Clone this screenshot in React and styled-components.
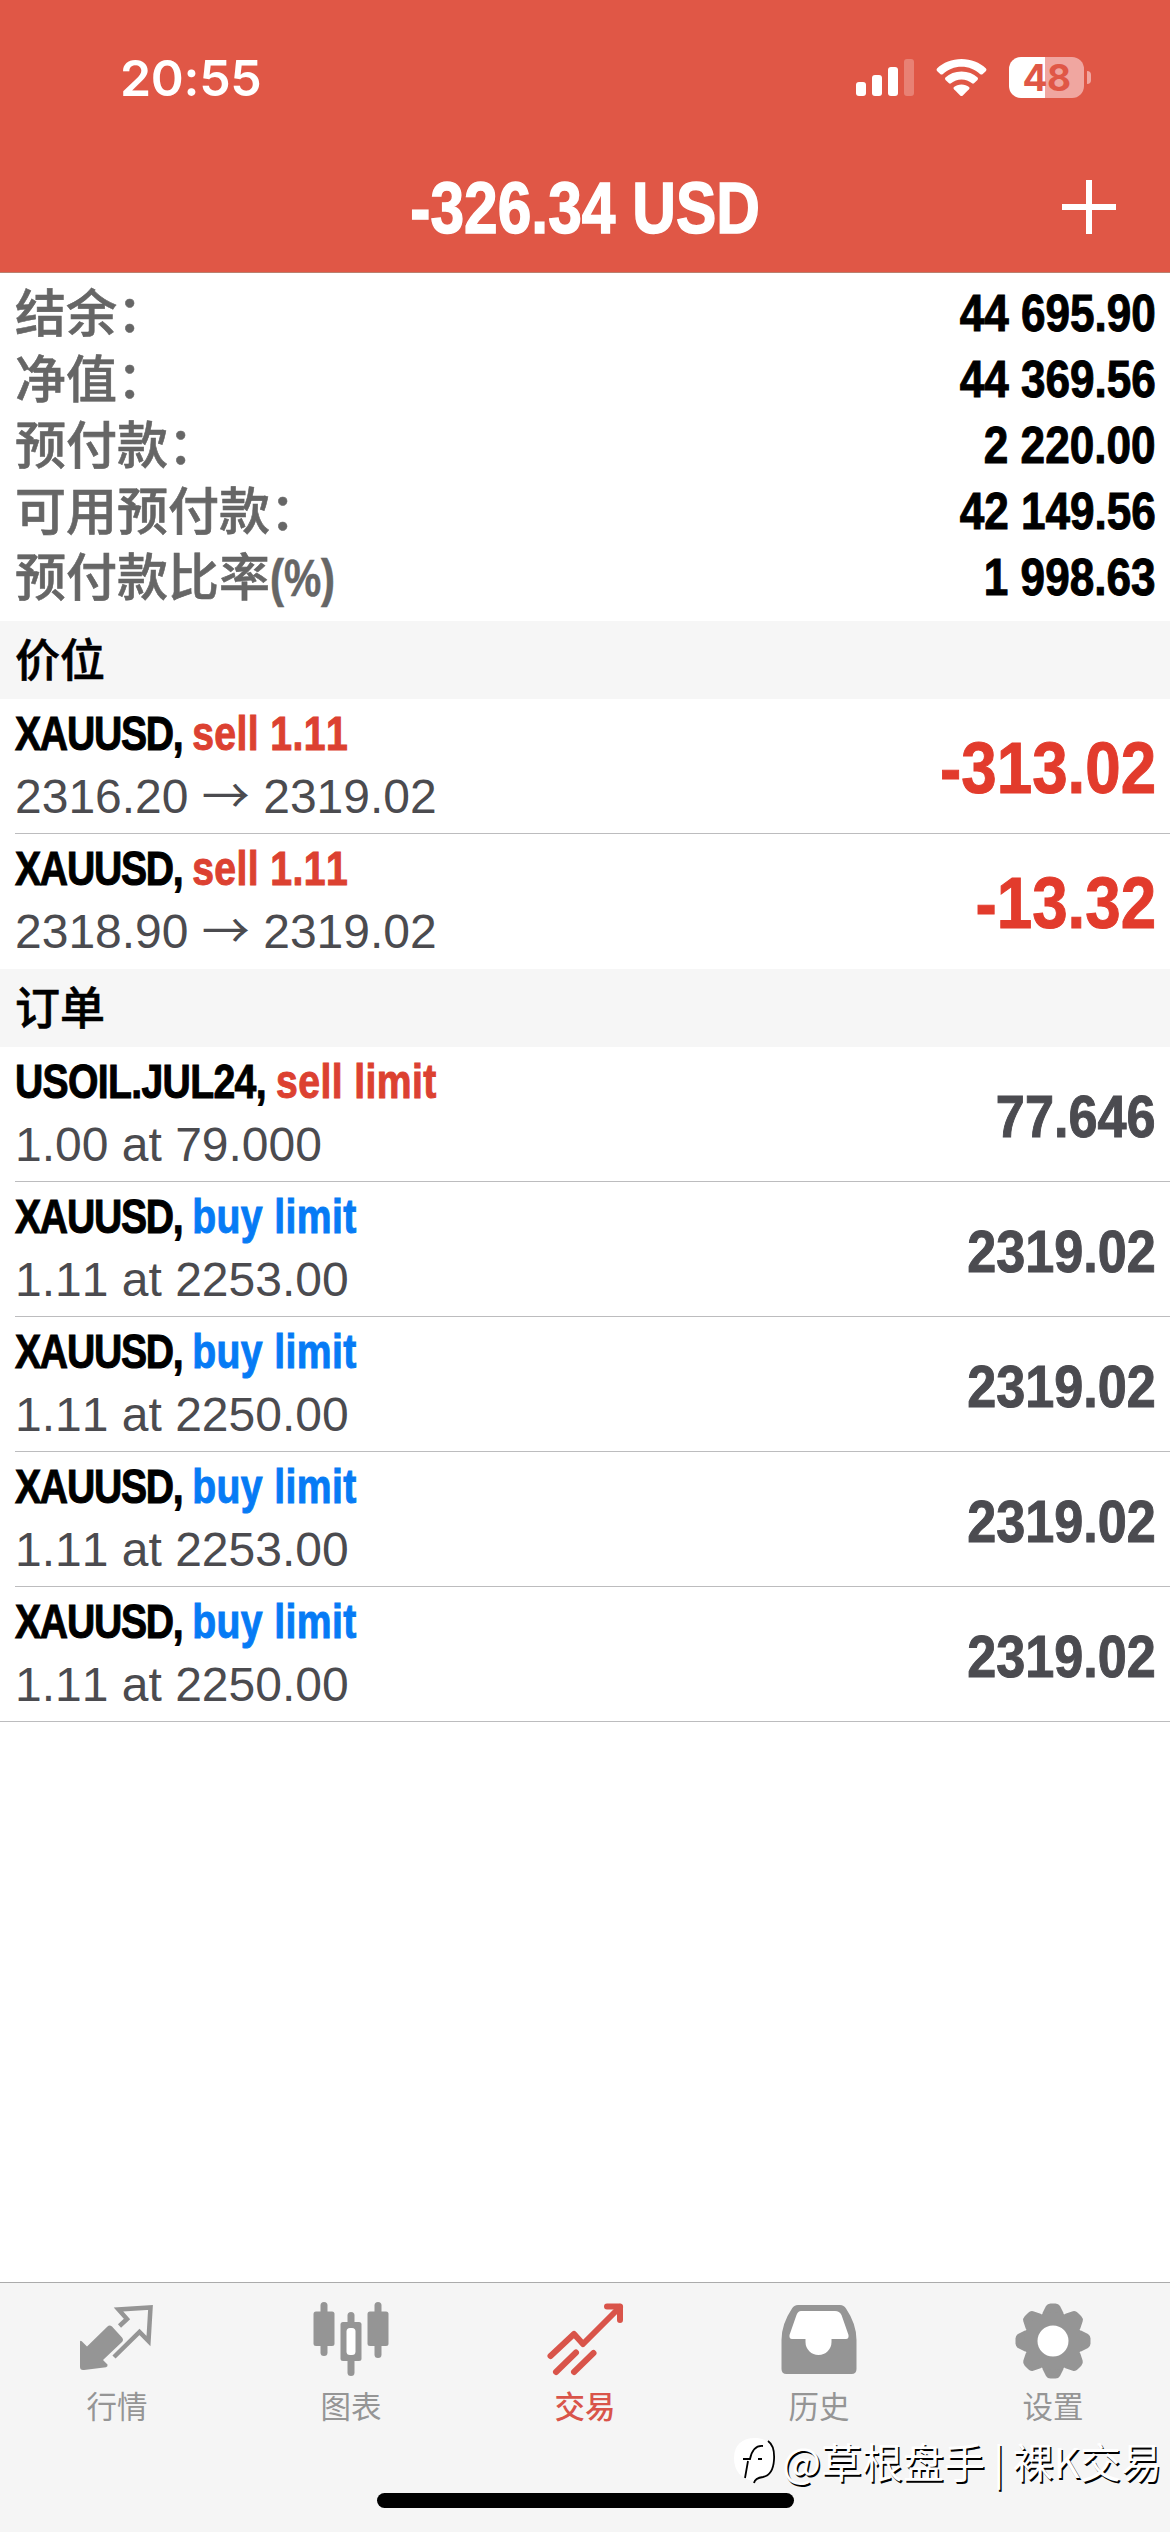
import React from 'react';
import styled, { createGlobalStyle } from 'styled-components';

const GlobalStyle = createGlobalStyle`
  * {
    box-sizing: border-box;
  }
  body {
    margin: 0;
    background: #fff;
    font-family: 'Liberation Sans', 'Noto Sans CJK SC', sans-serif;
    font-kerning: none;
  }
`;

const Screen = styled.div`
  position: relative;
  display: flex;
  flex-direction: column;
  width: 1170px;
  height: 2532px;
  overflow: hidden;
  background: #fff;
`;

const Header = styled.header`
  height: 273px;
  background: #e05746;
  border-bottom: 1px solid #b9816f;
  color: #fff;
`;

const StatusBar = styled.div`
  display: flex;
  justify-content: space-between;
  align-items: center;
  height: 155px;
  padding: 0 86px 0 120px;
`;

const Clock = styled.span`
  font-family: Inter, sans-serif;
  font-size: 50px;
  font-weight: 600;
  line-height: 60px;
  letter-spacing: -0.3px;
`;

const StatusIcons = styled.div`
  display: flex;
  align-items: center;
  gap: 22px;
`;

const Battery = styled.div`
  position: relative;
  display: flex;
  align-items: center;
  justify-content: center;
  width: 75px;
  height: 41px;
  border-radius: 12px;
  background: linear-gradient(to right, #fff 36px, #f0a6a0 36px);
  color: #e05746;
  font-family: Inter, sans-serif;
  font-size: 37px;
  font-weight: 700;
  line-height: 41px;
  letter-spacing: -0.5px;

  &::after {
    content: '';
    position: absolute;
    right: -7px;
    top: 14px;
    width: 4px;
    height: 13px;
    border-radius: 0 4px 4px 0;
    background: #f0a6a0;
  }
`;

const TitleBar = styled.div`
  display: grid;
  grid-template-columns: 1fr auto 1fr;
  align-items: center;
  height: 104px;
  padding: 0 54px;
`;

const Title = styled.h1`
  grid-column: 2;
  margin: 0;
  font-size: 72px;
  font-weight: 700;
  line-height: 104px;
  -webkit-text-stroke: 1.5px currentColor;
  transform: translateY(1px) scaleX(0.84);
`;

const AddButton = styled.button`
  justify-self: end;
  display: flex;
  padding: 0;
  border: 0;
  background: none;
`;

const Summary = styled.section`
  padding: 7px 14px 11px 15px;
`;

const SummaryRow = styled.div`
  display: flex;
  justify-content: space-between;
  align-items: center;
  height: 66px;
`;

const SummaryLabel = styled.span`
  padding-top: 4px;
  color: #666;
  font-size: 51px;
  font-weight: 500;
  line-height: 62px;
  -webkit-text-stroke: 0.6px currentColor;
`;

const Unit = styled.span`
  display: inline-block;
  font-weight: 700;
  transform: scaleX(0.82);
  transform-origin: left;
`;

const SummaryValue = styled.span`
  padding-top: 2px;
  color: #000;
  font-size: 51px;
  font-weight: 700;
  line-height: 64px;
  -webkit-text-stroke: 1px currentColor;
  transform: scaleX(0.865);
  transform-origin: right;
`;

const SectionTitle = styled.h2`
  height: 78px;
  margin: 0;
  padding: 0 15px;
  background: #f6f6f6;
  color: #000;
  font-size: 45px;
  font-weight: 500;
  line-height: 81px;
  -webkit-text-stroke: 0.6px currentColor;
`;

const List = styled.ul`
  margin: 0;
  padding: 0;
  list-style: none;
`;

const Row = styled.li`
  display: flex;
  justify-content: space-between;
  height: 135px;
  margin-left: ${({ $inset }) => ($inset ? '15px' : '0')};
  padding: 3px 14px 0 ${({ $inset }) => ($inset ? '0' : '15px')};
  border-bottom: 1px solid ${({ $line }) => ($line ? '#bcbcbe' : 'transparent')};
`;

const RowInfo = styled.div`
  display: flex;
  flex-direction: column;
`;

const RowTitle = styled.div`
  font-size: 48px;
  font-weight: 700;
  line-height: 63px;
  white-space: pre;
  -webkit-text-stroke: 1px currentColor;
  transform: scaleX(0.815);
  transform-origin: left;
`;

const Symbol = styled.span`
  letter-spacing: ${({ $tracking }) => $tracking};
`;

const Side = styled.span`
  color: ${({ $buy }) => ($buy ? '#067bf5' : '#dc4131')};
  letter-spacing: 0.5px;
`;

const RowDetail = styled.div`
  color: #4b4b4f;
  font-size: 48px;
  line-height: 63px;
`;

const Arrow = styled.span`
  font-family: 'Noto Sans CJK SC', sans-serif;
  font-weight: 400;
  line-height: 1;
`;

const RowAmount = styled.span`
  color: ${({ $loss }) => ($loss ? '#e23b2c' : '#4b4b50')};
  font-size: ${({ $loss }) => ($loss ? '72px' : '60px')};
  font-weight: 700;
  line-height: 133px;
  -webkit-text-stroke: 1px currentColor;
  transform: scaleX(${({ $loss }) => ($loss ? 0.885 : 0.87)});
  transform-origin: right;
`;

const TabBar = styled.nav`
  display: flex;
  height: 250px;
  margin-top: auto;
  border-top: 1px solid #ababab;
  background: #f5f5f5;
`;

const Tab = styled.a`
  flex: 1;
  display: flex;
  flex-direction: column;
  align-items: center;
  padding-top: 20px;
  color: ${({ $active }) => ($active ? '#d9544a' : '#959595')};
  font-family: 'Noto Sans CJK SC', sans-serif;
  font-size: 30.5px;
  font-weight: ${({ $active }) => ($active ? 500 : 400)};
  line-height: 40px;
  text-decoration: none;

  svg {
    margin-bottom: 6px;
    overflow: visible;
  }
`;

const HomeIndicator = styled.div`
  position: absolute;
  left: 377px;
  bottom: 24px;
  width: 417px;
  height: 15px;
  border-radius: 8px;
  background: #000;
`;

const Watermark = styled.div`
  position: absolute;
  right: 8px;
  bottom: 42px;
  display: flex;
  align-items: center;
  gap: 5px;
  color: #fff;
  font-family: 'Noto Sans CJK SC', sans-serif;
  font-size: 41px;
  line-height: 60px;
  white-space: pre;
  word-spacing: -1px;
  text-shadow: 1.5px 1.5px 0 #000;
`;

const SignalIcon = () => (
  <svg width="58" height="37" viewBox="0 0 58 37" fill="#fff">
    <rect x="0" y="23" width="10" height="14" rx="3" />
    <rect x="16" y="16" width="10" height="21" rx="3" />
    <rect x="32" y="8" width="10" height="29" rx="3" />
    <rect x="48" y="0" width="10" height="37" rx="3" opacity="0.25" />
  </svg>
);

const WifiIcon = () => (
  <svg width="51" height="37" viewBox="0 0 51 37" fill="#fff">
    <path d="M25.5 0C35 0 43.700 3.500 50 9.500Q51 10.800 50 12L46.500 15.200Q45.500 16 44.300 15.200C39 10.400 32.600 7.800 25.500 7.800S12 10.400 6.700 15.200Q5.500 16 4.500 15.200L1 12Q0 10.800 1 9.500C7.300 3.500 16 0 25.500 0Z" />
    <path d="M25.500 12.500C32 12.500 37.400 14.800 41.600 18.600Q42.500 19.800 41.500 21L38 24.300Q37 25 36 24.300C33 21.800 29.500 20.500 25.500 20.500S18 21.800 15 24.300Q14 25 13 24.300L9.500 21Q8.500 19.800 9.400 18.600C13.600 14.800 19 12.500 25.500 12.500Z" />
    <path d="M25.500 25.500C28.500 25.500 31 26.500 33 28Q34 29.200 33 30.300L26.800 36.400Q25.500 37.400 24.200 36.400L18 30.300Q17 29.200 18 28C20 26.500 22.500 25.500 25.500 25.500Z" />
  </svg>
);

const PlusIcon = () => (
  <svg width="54" height="54" viewBox="0 0 54 54" stroke="#fff" strokeWidth="6">
    <path d="M27 0V54M0 27H54" />
  </svg>
);

const QuotesIcon = () => (
  <svg width="76" height="76" viewBox="0 0 76 76">
    <path
      d="M1 34.500Q1.500 33 3 34.500L8 39.500L28.500 19.500Q30.500 17.500 33 19.500L43 30.500Q45 32.800 43 35L24 53L28.500 57.500Q29 59.800 27 60.200L5 63Q1 63.500 1 60Z"
      fill="currentColor"
      transform="translate(0 4)"
    />
    <path
      d="M40.500 22L48 15L39.500 5.500L71.500 3.500L69.500 37L60.500 28L35 53"
      fill="none"
      stroke="currentColor"
      strokeWidth="4.500"
      transform="translate(0 1)"
    />
  </svg>
);

const ChartIcon = () => (
  <svg width="76" height="76" viewBox="0 0 76 76" fill="currentColor">
    <rect x="7.500" y="-1" width="7" height="54" rx="3.500" />
    <rect x="0.500" y="8.500" width="21" height="34.500" rx="2.500" />
    <rect x="61.500" y="-1" width="7" height="56" rx="3.500" />
    <rect x="54.500" y="8.500" width="21" height="34.500" rx="2.500" />
    <rect x="34.500" y="9" width="7" height="64" rx="3.500" />
    <rect x="27.500" y="19" width="21" height="39" rx="2.500" />
    <rect x="33.500" y="25" width="9" height="27" rx="3.500" fill="#fff" />
  </svg>
);

const TradeIcon = () => (
  <svg
    width="76"
    height="76"
    viewBox="0 0 76 76"
    fill="none"
    stroke="currentColor"
    strokeWidth="6"
    strokeLinecap="round"
    strokeLinejoin="round"
  >
    <path d="M3.500 53L27 31L36 41L73 4" />
    <path d="M60 3.500H73V17" />
    <path d="M9 69L29 49.500M27 69L46.500 50" />
  </svg>
);

const HistoryIcon = () => (
  <svg width="76" height="76" viewBox="0 0 76 76">
    <path
      d="M17 2H59Q63 2 65 5.500Q75.500 21 75.500 37V66Q75.500 71 70.500 71H5.500Q0.500 71 0.500 66V37Q0.500 21 11 5.500Q13 2 17 2Z"
      fill="currentColor"
    />
    <path
      d="M20 8H54Q58.500 8 60.500 12L67.500 32Q68 36 65 36H50.500V39A13 13 0 0 1 24.500 39V36H11Q8 36 8.500 32L15.500 12Q17 8 20 8Z"
      fill="#fff"
    />
  </svg>
);

const SettingsIcon = () => (
  <svg width="76" height="76" viewBox="0 0 76 76" fill="currentColor">
    {[0, 45, 90, 135].map((angle) => (
      <path
        key={angle}
        d="M31 3Q32.500 0.500 35.500 0.500H40.500Q43.500 0.500 45 3L48.500 10V66L45 73Q43.500 75.500 40.500 75.500H35.500Q32.500 75.500 31 73L27.500 66V10Z"
        transform={`rotate(${angle} 38 38)`}
      />
    ))}
    <circle cx="38" cy="38" r="29" />
    <circle cx="38" cy="38" r="15.500" fill="#fff" />
  </svg>
);

const WatermarkLogo = () => (
  <svg width="44" height="48" viewBox="0 0 44 48">
    <path d="M22 2C34 2 41 9 41 22C41 35 34 42 21 45C8 43 1 35 1 22S9 2 22 2Z" fill="#fff" />
    <path
      d="M35 5Q42 10 41 24Q40 39 30 41Q22 42 21 47M12 42L15 25M10 23H17Q20 9 30 10M25 23H29"
      fill="none"
      stroke="#000"
      strokeWidth="1.800"
    />
  </svg>
);

const summary = [
  { label: '结余：', value: '44 695.90' },
  { label: '净值：', value: '44 369.56' },
  { label: '预付款：', value: '2 220.00' },
  { label: '可用预付款：', value: '42 149.56' },
  { label: '预付款比率', unit: '(%)', value: '1 998.63' },
];

const positions = [
  { symbol: 'XAUUSD', side: 'sell 1.11', open: '2316.20', current: '2319.02', profit: '-313.02' },
  { symbol: 'XAUUSD', side: 'sell 1.11', open: '2318.90', current: '2319.02', profit: '-13.32' },
];

const orders = [
  { symbol: 'USOIL.JUL24', side: 'sell limit', detail: '1.00 at 79.000', price: '77.646', tracking: '-0.8px' },
  { symbol: 'XAUUSD', side: 'buy limit', detail: '1.11 at 2253.00', price: '2319.02' },
  { symbol: 'XAUUSD', side: 'buy limit', detail: '1.11 at 2250.00', price: '2319.02' },
  { symbol: 'XAUUSD', side: 'buy limit', detail: '1.11 at 2253.00', price: '2319.02' },
  { symbol: 'XAUUSD', side: 'buy limit', detail: '1.11 at 2250.00', price: '2319.02' },
];

const tabs = [
  { label: '行情', Icon: QuotesIcon },
  { label: '图表', Icon: ChartIcon },
  { label: '交易', Icon: TradeIcon, active: true },
  { label: '历史', Icon: HistoryIcon },
  { label: '设置', Icon: SettingsIcon },
];

const TradeRow = ({ symbol, side, tracking = '-1.5px', amount, loss, inset, line, children }) => (
  <Row $inset={inset} $line={line}>
    <RowInfo>
      <RowTitle>
        <Symbol $tracking={tracking}>{symbol}, </Symbol>
        <Side $buy={side.startsWith('buy')}>{side}</Side>
      </RowTitle>
      <RowDetail>{children}</RowDetail>
    </RowInfo>
    <RowAmount $loss={loss}>{amount}</RowAmount>
  </Row>
);

const App = () => {
  return (
    <>
      <GlobalStyle />
      <Screen>
        <Header>
          <StatusBar>
            <Clock>20:55</Clock>
            <StatusIcons>
              <SignalIcon />
              <WifiIcon />
              <Battery>48</Battery>
            </StatusIcons>
          </StatusBar>
          <TitleBar>
            <Title>-326.34 USD</Title>
            <AddButton>
              <PlusIcon />
            </AddButton>
          </TitleBar>
        </Header>
        <Summary>
          {summary.map(({ label, unit, value }) => (
            <SummaryRow key={label}>
              <SummaryLabel>
                {label}
                {unit && <Unit>{unit}</Unit>}
              </SummaryLabel>
              <SummaryValue>{value}</SummaryValue>
            </SummaryRow>
          ))}
        </Summary>
        <SectionTitle>价位</SectionTitle>
        <List>
          {positions.map(({ symbol, side, open, current, profit }, i) => {
            const last = i === positions.length - 1;
            return (
              <TradeRow key={i} symbol={symbol} side={side} amount={profit} loss inset={!last} line={!last}>
                {open} <Arrow>→</Arrow> {current}
              </TradeRow>
            );
          })}
        </List>
        <SectionTitle>订单</SectionTitle>
        <List>
          {orders.map(({ symbol, side, detail, price, tracking }, i) => (
            <TradeRow
              key={i}
              symbol={symbol}
              side={side}
              tracking={tracking}
              amount={price}
              inset={i < orders.length - 1}
              line
            >
              {detail}
            </TradeRow>
          ))}
        </List>
        <TabBar>
          {tabs.map(({ label, Icon, active }) => (
            <Tab key={label} $active={active}>
              <Icon />
              {label}
            </Tab>
          ))}
        </TabBar>
        <HomeIndicator />
        <Watermark>
          <WatermarkLogo />
          @草根盘手 | 裸K交易
        </Watermark>
      </Screen>
    </>
  );
};

export default App;
